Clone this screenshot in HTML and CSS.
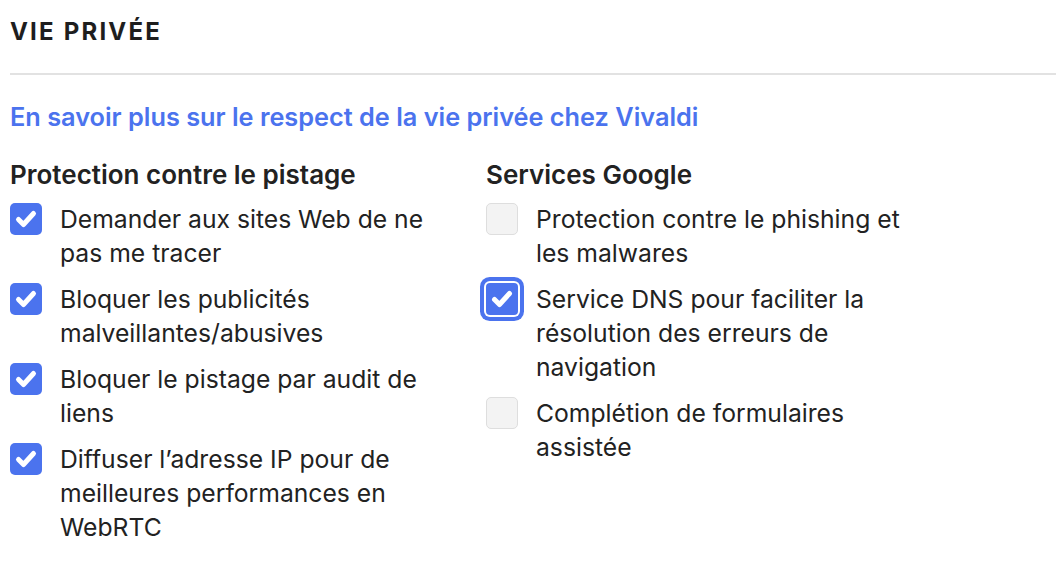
FILE: index.html
```html
<!DOCTYPE html>
<html lang="fr">
<head>
    <meta charset="UTF-8">
    <title>Vie privée</title>
    <link rel="stylesheet" href="styles.css">
</head>
<body>

    <!-- Privacy settings section -->
    <div class="section">
        <h2 class="section-title">VIE PRIVÉE</h2>

        <a class="more-link" href="#">En savoir plus sur le respect de la vie privée chez Vivaldi</a>

        <div class="columns">
            <div class="group">
                <h3>Protection contre le pistage</h3>
                <label class="option">
                    <span class="check on"></span>
                    <span class="text">Demander aux sites Web de ne pas me tracer</span>
                </label>
                <label class="option">
                    <span class="check on"></span>
                    <span class="text">Bloquer les publicités malveillantes/abusives</span>
                </label>
                <label class="option">
                    <span class="check on"></span>
                    <span class="text">Bloquer le pistage par audit de liens</span>
                </label>
                <label class="option">
                    <span class="check on"></span>
                    <span class="text">Diffuser l’adresse IP pour de meilleures performances en WebRTC</span>
                </label>
            </div>

            <div class="group">
                <h3>Services Google</h3>
                <label class="option">
                    <span class="check"></span>
                    <span class="text">Protection contre le phishing et les malwares</span>
                </label>
                <label class="option">
                    <span class="check on focused"></span>
                    <span class="text">Service DNS pour faciliter la résolution des erreurs de navigation</span>
                </label>
                <label class="option">
                    <span class="check"></span>
                    <span class="text">Complétion de formulaires assistée</span>
                </label>
            </div>
        </div>
    </div>

</body>
</html>
```

FILE: styles.css
```css
/* Global Styles */
body {
    font-family: Inter, "Noto Sans", sans-serif;
    background-color: #fff;
    color: #222;
    margin: 0;
    padding: 0;
}
.section {
    padding: 0 0 0 10px;
}
.section-title {
    margin: 0;
    padding: 18px 0 27px;
    font-size: 24px;
    font-weight: 700;
    letter-spacing: 2.2px;
    line-height: 28px;
    color: #1e1e1e;
    border-bottom: 2px solid #e2e2e2;
}
.more-link {
    display: block;
    margin-top: 25px;
    color: #4b73ee;
    font-size: 25.3px;
    font-weight: 600;
    line-height: 34px;
    text-decoration: none;
}
.columns {
    display: grid;
    grid-template-columns: 430px 430px;
    column-gap: 46px;
    margin-top: 24px;
}
.group h3 {
    margin: 0 0 10px;
    font-size: 26px;
    font-weight: 600;
    line-height: 34px;
}
.option {
    display: flex;
    gap: 18px;
    margin-bottom: 12px;
    font-size: 24.7px;
    line-height: 34px;
}
.check {
    flex: none;
    width: 32px;
    height: 32px;
    margin-top: 1px;
    box-sizing: border-box;
    border: 1px solid #dedede;
    border-radius: 5px;
    background-color: #f3f3f3;
}
.check.on {
    border: none;
    background-color: #4b73ee;
    background-image: url("data:image/svg+xml,%3Csvg xmlns='http://www.w3.org/2000/svg' viewBox='0 0 32 32'%3E%3Cpath d='M8.5 16.5l5 5 10-11' fill='none' stroke='%23fff' stroke-width='5' stroke-linecap='round' stroke-linejoin='round'/%3E%3C/svg%3E");
}
.check.focused {
    box-shadow: 0 0 0 2px #fff, 0 0 0 6px #4b73ee;
    border-radius: 4px;
}
.text {
    max-width: 385px;
}
```
